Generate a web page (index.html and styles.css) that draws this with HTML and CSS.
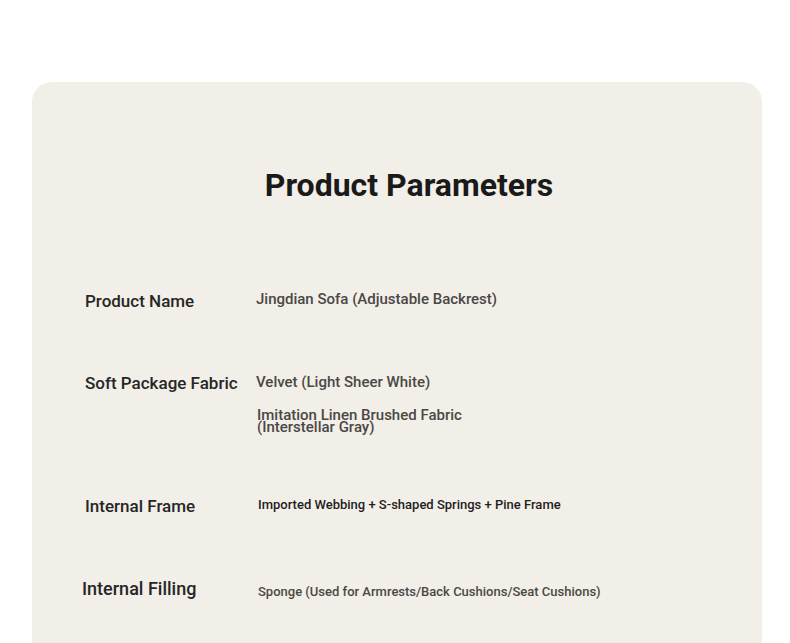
FILE: index.html
```html
<!DOCTYPE html>
<html lang="en">
<head>
<meta charset="utf-8">
<title>Product Parameters</title>
<link rel="stylesheet" href="styles.css">
</head>
<body>
<main class="card">
  <h1 class="title">Product Parameters</h1>
  <div class="params">
    <div class="row row-name">
      <div class="label">Product Name</div>
      <div class="value">Jingdian Sofa (Adjustable Backrest)</div>
    </div>
    <div class="row row-fabric">
      <div class="label">Soft Package Fabric</div>
      <div class="value">
        <div class="line">Velvet (Light Sheer White)</div>
        <div class="line line-tight">Imitation Linen Brushed Fabric<br>(Interstellar Gray)</div>
      </div>
    </div>
    <div class="row row-frame">
      <div class="label">Internal Frame</div>
      <div class="value value-small value-dark">Imported Webbing + S-shaped Springs + Pine Frame</div>
    </div>
    <div class="row row-filling">
      <div class="label label-shift">Internal Filling</div>
      <div class="value value-small">Sponge (Used for Armrests/Back Cushions/Seat Cushions)</div>
    </div>
  </div>
</main>
</body>
</html>
```

FILE: styles.css
```css
html, body {
  margin: 0;
  padding: 0;
  background: #ffffff;
}

body {
  font-family: Roboto, "Liberation Sans", sans-serif;
  color: #222;
  height: 643px;
  overflow: hidden;
}

.card {
  margin: 82px 0 0 32px;
  width: 730px;
  min-height: 620px;
  background: #f2eee8;
  border-radius: 20px;
  padding: 84px 0 0 0;
  box-sizing: border-box;
}

.title {
  margin: 0;
  padding-left: 24px;
  text-align: center;
  font-size: 32px;
  line-height: 38px;
  font-weight: 700;
  color: #1a1a1a;
}

.params {
  margin-top: 85px;
  padding-left: 53px;
  display: flex;
  flex-direction: column;
  gap: 59px;
}

.row {
  display: grid;
  grid-template-columns: 171px 1fr;
  align-items: start;
}

.label {
  font-size: 17px;
  line-height: 24px;
  font-weight: 500;
  color: #262626;
}

.label-shift {
  margin-left: -3px;
  font-size: 18px;
}

.value {
  font-size: 15px;
  line-height: 20px;
  font-weight: 500;
  color: #4a4846;
}

.line-tight {
  margin-top: 17px;
  line-height: 12px;
  padding-left: 1px;
}

.row-fabric {
  margin-top: -1px;
}

.row-fabric .value {
  padding-top: 1px;
}

.value-small {
  font-size: 13px;
  padding-left: 2px;
  margin-top: 0;
}

.value-dark {
  color: #1e1e1e;
}

.row-frame {
  margin-top: 2px;
}

.row-frame .value {
  padding-top: 1px;
}

.row-filling .value {
  padding-top: 5px;
}
```
